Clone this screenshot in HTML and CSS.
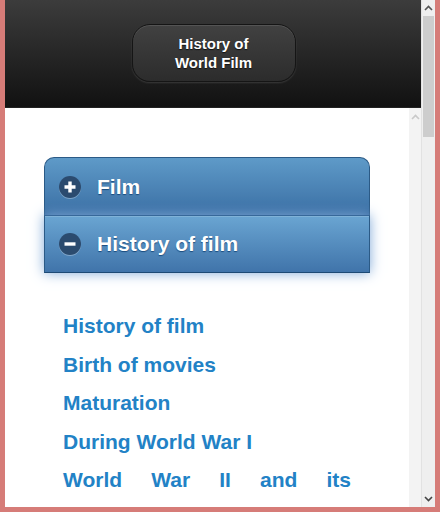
FILE: index.html
```html
<!DOCTYPE html>
<html lang="en">
<head>
    <meta charset="UTF-8">
    <title>History of World Film</title>
    <link rel="stylesheet" href="styles.css">
</head>
<body>

<div class="frame">
    <div class="page">
        <div class="header-bar">
            <div class="title-button">History of<br>World Film</div>
        </div>
        <div class="page-body">
            <div class="content">
                <div class="collapsible-set">
                    <div class="collapsible-heading">
                        <span class="icon-circle">
                            <svg width="12" height="12" viewBox="0 0 12 12"><path d="M6 0.5V11.5M0.5 6H11.5" stroke="#fff" stroke-width="3.4" fill="none"/></svg>
                        </span>
                        <span class="heading-text">Film</span>
                    </div>
                    <div class="collapsible-heading focused">
                        <span class="icon-circle">
                            <svg width="12" height="12" viewBox="0 0 12 12"><path d="M0.5 6H11.5" stroke="#fff" stroke-width="3.4" fill="none"/></svg>
                        </span>
                        <span class="heading-text">History of film</span>
                    </div>
                </div>

                <ul class="link-list">
                    <li><a href="#">History of film</a></li>
                    <li><a href="#">Birth of movies</a></li>
                    <li><a href="#">Maturation</a></li>
                    <li><a href="#">During World War I</a></li>
                    <li><a href="#">World War II and its aftermath</a></li>
                </ul>
            </div>
            <div class="inner-scroll">
                <svg class="arrow-faint" width="9" height="6" viewBox="0 0 9 6"><path d="M1 5L4.5 1.5L8 5" stroke="#c9c9c9" stroke-width="1.6" fill="none"/></svg>
            </div>
        </div>
    </div>
    <div class="outer-scroll">
        <div class="scroll-arrow">
            <svg width="9" height="6" viewBox="0 0 9 6"><path d="M1 5L4.5 1.5L8 5" stroke="#555" stroke-width="1.6" fill="none"/></svg>
        </div>
        <div class="scroll-thumb"></div>
        <div class="scroll-track"></div>
        <div class="scroll-arrow">
            <svg width="9" height="6" viewBox="0 0 9 6"><path d="M1 1L4.5 4.5L8 1" stroke="#444" stroke-width="1.6" fill="none"/></svg>
        </div>
    </div>
</div>

</body>
</html>
```

FILE: styles.css
```css
html, body {
    margin: 0;
    padding: 0;
}

body {
    width: 440px;
    height: 512px;
    overflow: hidden;
    font-family: "Liberation Sans", Arial, sans-serif;
}

.frame {
    box-sizing: border-box;
    height: 512px;
    display: flex;
    border-left: 5px solid #d67c78;
    border-right: 5px solid #d67c78;
    border-bottom: 5px solid #d67c78;
    box-shadow: inset 1px 0 0 #e9a9a6, inset -1px 0 0 #e9a9a6, inset 0 -1px 0 #e9a9a6;
}

.page {
    flex: 1;
    display: flex;
    flex-direction: column;
    min-width: 0;
}

/* Header */
.header-bar {
    height: 108px;
    flex: none;
    display: flex;
    align-items: center;
    justify-content: center;
    background: linear-gradient(#3c3c3c, #111);
    border-bottom: 1px solid #222;
    box-sizing: border-box;
}

.title-button {
    width: 164px;
    height: 58px;
    box-sizing: border-box;
    display: flex;
    align-items: center;
    justify-content: center;
    text-align: center;
    margin-left: 1px;
    margin-top: -1px;
    border: 1px solid #151515;
    border-radius: 18px;
    background: linear-gradient(#414141, #2c2c2c);
    box-shadow: 0 1px 2px rgba(255, 255, 255, .14), inset 0 1px 0 rgba(255, 255, 255, .1);
    color: #fff;
    font-size: 15px;
    font-weight: bold;
    line-height: 19px;
    text-shadow: 0 1px 1px #111;
}

/* Body */
.page-body {
    flex: 1;
    display: flex;
    min-height: 0;
}

.content {
    flex: 1;
    background: #fff;
    padding: 49px 39px 0;
    overflow: hidden;
}

.inner-scroll {
    width: 12px;
    flex: none;
    background: #f3f3f3;
    display: flex;
    justify-content: center;
    padding-top: 6px;
    box-sizing: border-box;
}

.arrow-faint {
    display: block;
}

/* Collapsible set */
.collapsible-heading {
    height: 58px;
    box-sizing: border-box;
    display: flex;
    align-items: center;
    padding-left: 14px;
    gap: 16px;
    border: 1px solid #2b5a86;
    background: linear-gradient(#5e9ac8, #3b6fa4);
    color: #fff;
    text-shadow: 0 1px 1px #194b7e;
    font-size: 21px;
    font-weight: bold;
}

.collapsible-heading:first-child {
    border-radius: 10px 10px 0 0;
    border-bottom: none;
    padding-top: 1px;
}

.collapsible-heading.focused {
    border-top: 1px solid #37689a;
    border-bottom: 1px solid #1d4a75;
    background: linear-gradient(#6aa5d2, #4074aa);
    box-shadow: 0 0 12px #7fa9d8, inset 0 1px 0 rgba(255, 255, 255, .15);
    position: relative;
}

.icon-circle {
    width: 22px;
    height: 22px;
    border-radius: 50%;
    background: #2b4b6f;
    box-shadow: 0 1px 0 rgba(255, 255, 255, .3);
    display: flex;
    align-items: center;
    justify-content: center;
    flex: none;
}

.icon-circle svg {
    display: block;
}

/* Links */
.link-list {
    list-style: none;
    margin: 34px 0 0;
    padding: 0 19px 0 19px;
}

.link-list li {
    font-size: 21px;
    font-weight: bold;
    line-height: 38.5px;
    text-align: justify;
}

.link-list a {
    color: #2282c6;
    text-decoration: none;
}

/* Outer scrollbar */
.outer-scroll {
    width: 13px;
    flex: none;
    display: flex;
    flex-direction: column;
    background: #efefef;
    border-left: 1px solid #e2e2e2;
}

.scroll-arrow {
    height: 16px;
    flex: none;
    display: flex;
    align-items: center;
    justify-content: center;
}

.scroll-thumb {
    height: 121px;
    margin: 0 1px;
    background: #cdcdcd;
}

.scroll-track {
    flex: 1;
}
```
